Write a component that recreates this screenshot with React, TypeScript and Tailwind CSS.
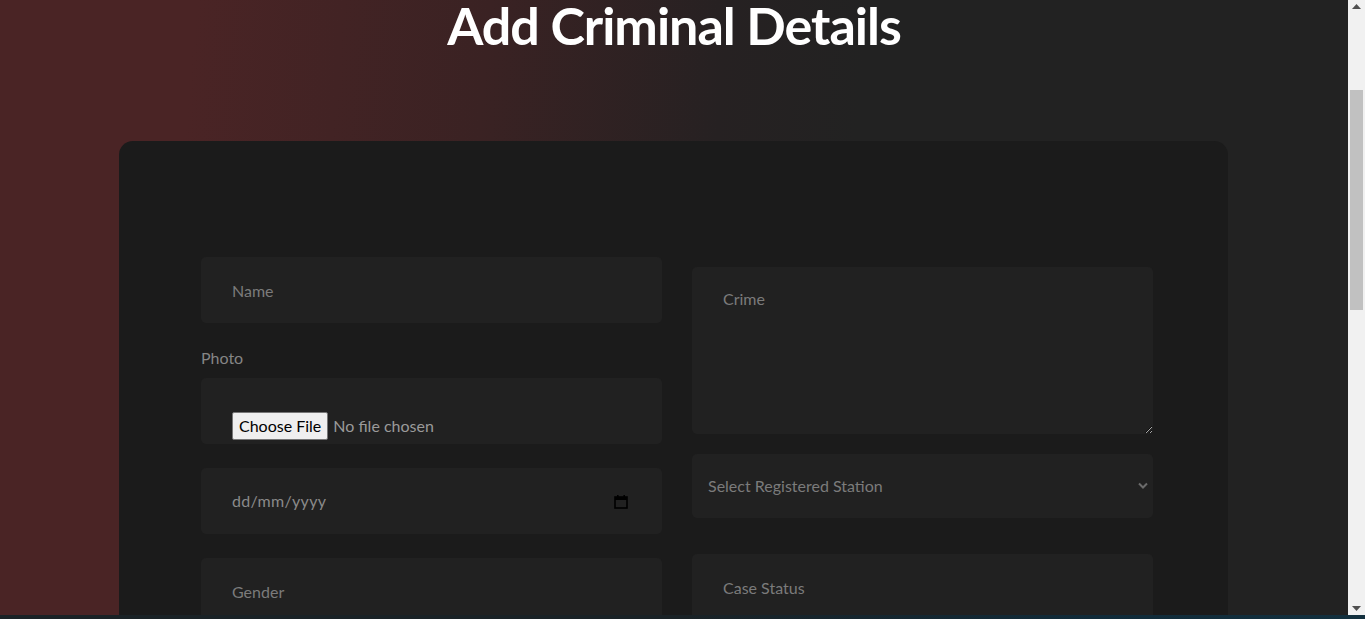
const CalendarIcon = () => (
    <svg width="14" height="15" viewBox="0 0 14 15" fill="none">
        <rect x="1" y="3" width="12" height="11" stroke="#000" strokeWidth="1.6" />
        <rect x="1" y="3" width="12" height="3" fill="#000" />
        <rect x="3" y="1" width="1.6" height="3" fill="#000" />
        <rect x="9.4" y="1" width="1.6" height="3" fill="#000" />
    </svg>
);

const ChevronIcon = () => (
    <svg width="10" height="7" viewBox="0 0 10 7" fill="none">
        <path d="M1 1.5 L5 5.5 L9 1.5" stroke="#6b6b6b" strokeWidth="2" />
    </svg>
);

const ScrollBar = () => (
    <div className="w-[17px] h-full flex flex-col bg-[#f1f1f1]">
        <div className="h-[17px] flex items-start justify-center pt-[4px]">
            <svg width="9" height="5" viewBox="0 0 9 5"><path d="M0 5 L4.5 0 L9 5 Z" fill="#505050" /></svg>
        </div>
        <div className="flex-1 px-[2px]">
            <div className="mt-[73px] h-[220px] bg-[#c1c1c1]" />
        </div>
        <div className="h-[17px] flex items-end justify-center pb-[4px]">
            <svg width="9" height="5" viewBox="0 0 9 5"><path d="M0 0 L4.5 5 L9 0 Z" fill="#505050" /></svg>
        </div>
    </div>
);

const inputCls =
    "w-full h-[66px] bg-[#212121] rounded-[5px] px-[31px] text-[16px] text-white outline-none placeholder:text-[#7b7b7b]";

const App = () => {
    return (
        <div className="flex flex-col h-[619px] w-full font-[family-name:Lato,sans-serif]">
            <div className="h-[615px] flex">
                <main className="flex-1 h-full overflow-hidden bg-[linear-gradient(95deg,#4a2425_0%,#4a2425_14%,#3a2223_35%,#262122_52%,#222222_62%)]">
                    <h1 className="text-center text-white font-bold text-[52px] leading-[50px] tracking-[-1px]">
                        Add Criminal Details
                    </h1>

                    <div className="ml-[119px] mt-[91px] w-[1109px] rounded-[14px] bg-[#1b1b1b] pt-[116px] pl-[82px] pr-[75px] pb-[80px]">
                        <form className="grid grid-cols-2 gap-x-[30px]" onSubmit={(e) => e.preventDefault()}>
                            <div className="flex flex-col">
                                <input className={inputCls} placeholder="Name" />
                                <label className="mt-[23px] text-[16px] leading-[24px] text-[#858585]">Photo</label>
                                <div className="mt-[8px] h-[66px] bg-[#212121] rounded-[5px] pl-[31px] pt-[34px] overflow-hidden">
                                    <input type="file"
                                        className="text-[16px] text-[#9a9a9a] file:mr-[5px] file:h-[28px] file:px-[6px] file:bg-[#efefef] file:text-black file:border file:border-solid file:border-[#767676] file:rounded-[2px]" />
                                </div>
                                <div className="mt-[24px] h-[66px] bg-[#212121] rounded-[5px] pl-[31px] pr-[34px] flex items-center justify-between">
                                    <span className="text-[16px] text-[#8a8a8a] tracking-[0.3px]">dd/mm/yyyy</span>
                                    <CalendarIcon />
                                </div>
                                <input className={`${inputCls} mt-[24px]`} placeholder="Gender" />
                                <input className={`${inputCls} mt-[24px]`} placeholder="Age" />
                            </div>

                            <div className="flex flex-col pt-[10px]">
                                <textarea className="w-full h-[167px] bg-[#212121] rounded-[5px] px-[31px] pt-[20px] text-[16px] text-white outline-none placeholder:text-[#7b7b7b]"
                                    placeholder="Crime" />
                                <div className="relative mt-[20px]">
                                    <select defaultValue=""
                                        className="w-full h-[64px] appearance-none bg-[#212121] rounded-[5px] pl-[16px] text-[16px] text-[#7b7b7b] outline-none">
                                        <option value="" disabled>Select Registered Station</option>
                                        <option>Central Station</option>
                                        <option>North Station</option>
                                    </select>
                                    <span className="absolute right-[5px] top-[28px]"><ChevronIcon /></span>
                                </div>
                                <input className={`${inputCls} mt-[36px]`} placeholder="Case Status" />
                                <input className={`${inputCls} mt-[24px]`} placeholder="Date of Arrest" />
                            </div>
                        </form>
                    </div>
                </main>
                <ScrollBar />
            </div>
            <div className="h-[4px] bg-[linear-gradient(to_right,#1a2226_0%,#1a2226_50%,#112b39_80%,#13303e_100%)]" />
        </div>
    );
};

export default App;
